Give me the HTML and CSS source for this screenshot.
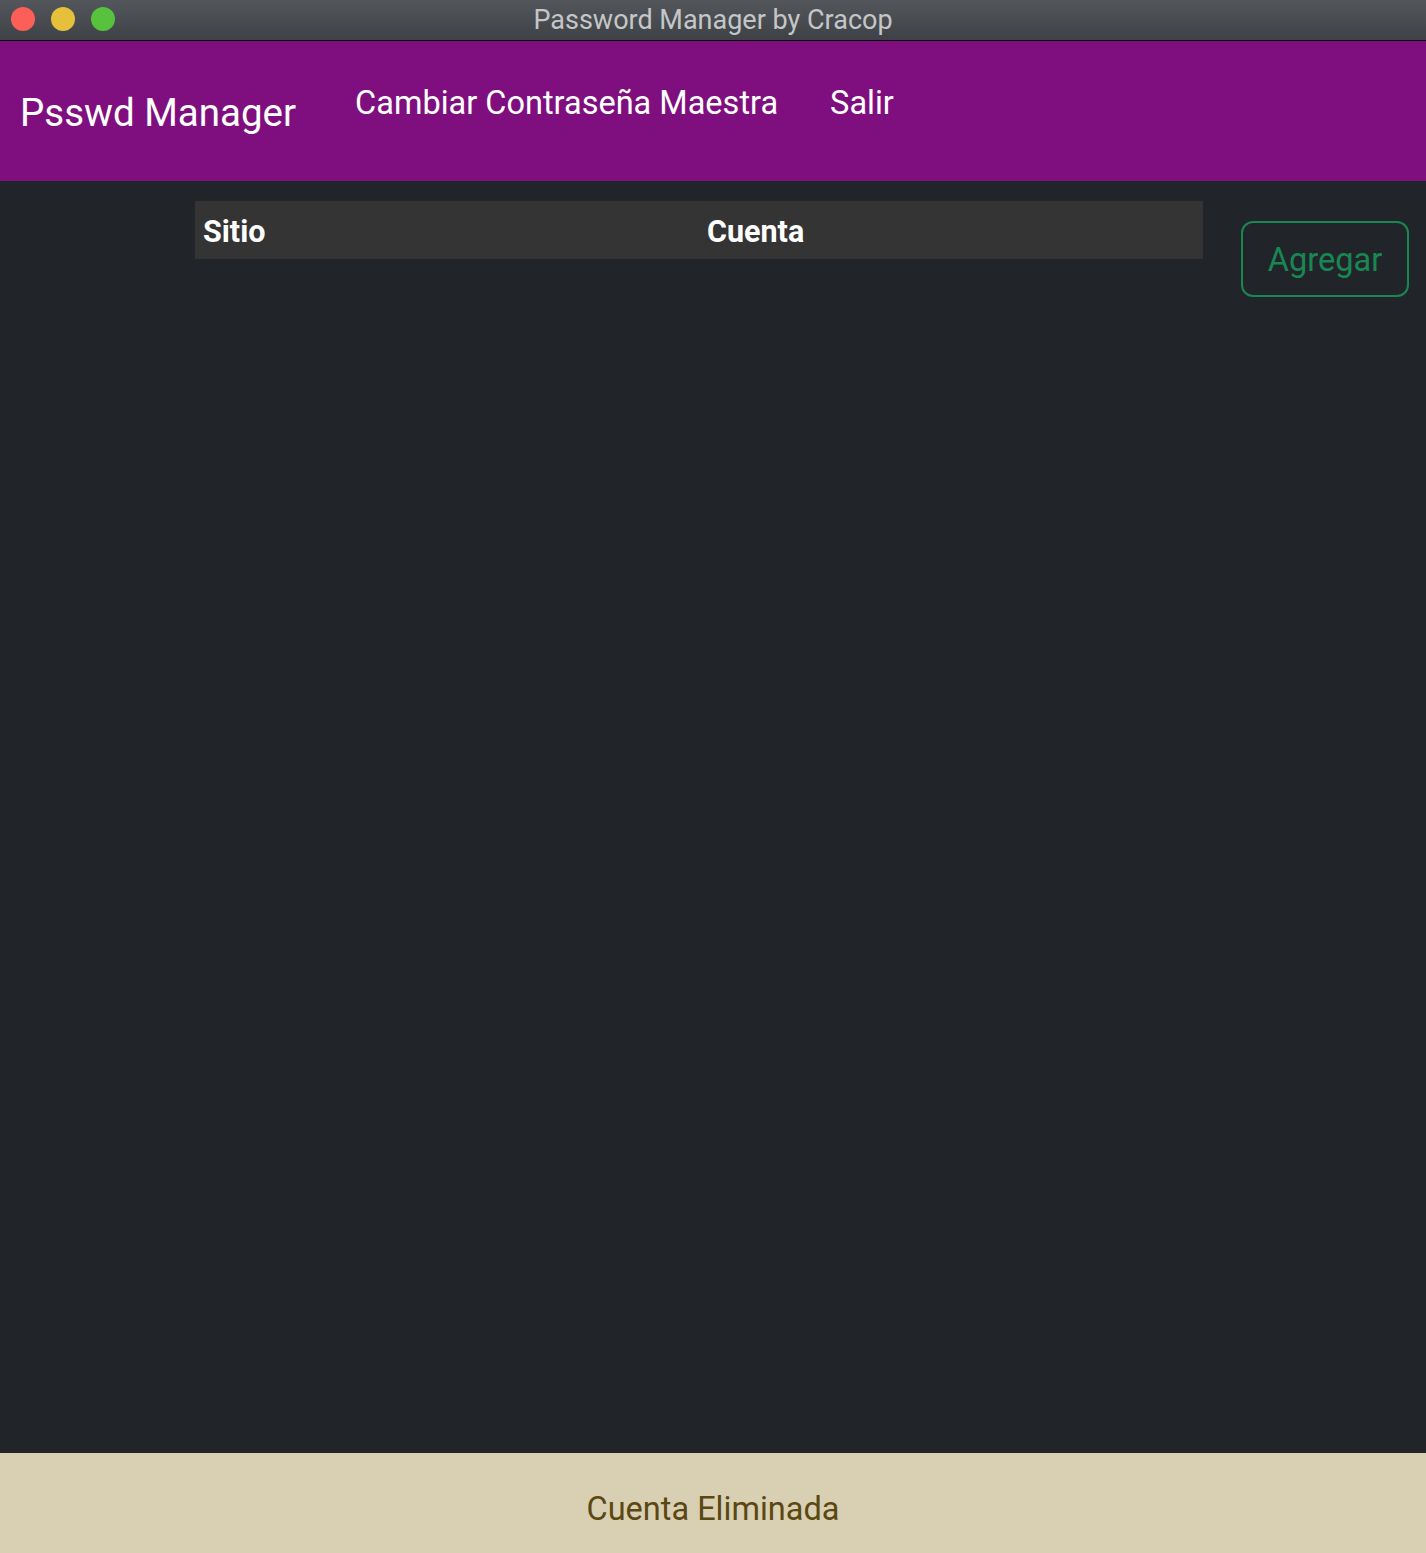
FILE: index.html
```html
<!DOCTYPE html>
<html lang="es">
<head>
<meta charset="utf-8">
<title>Password Manager by Cracop</title>
<link rel="stylesheet" href="styles.css">
</head>
<body>
<div class="window">
  <header class="titlebar">
    <div class="lights">
      <span class="light red"></span>
      <span class="light yellow"></span>
      <span class="light green"></span>
    </div>
    <div class="title">Password Manager by Cracop</div>
  </header>
  <nav class="navbar">
    <a class="brand">Psswd Manager</a>
    <ul class="nav">
      <li><a>Cambiar Contraseña Maestra</a></li>
      <li><a>Salir</a></li>
    </ul>
  </nav>
  <main class="content">
    <table class="table">
      <thead>
        <tr><th>Sitio</th><th>Cuenta</th></tr>
      </thead>
    </table>
    <button class="btn-add">Agregar</button>
  </main>
  <div class="alert">Cuenta Eliminada</div>
</div>
</body>
</html>
```
FILE: styles.css
```css
* { box-sizing: border-box; }
html, body { margin: 0; padding: 0; }
body {
  background: #212529;
  font-family: Roboto, "Liberation Sans", Arial, sans-serif;
  color: #fff;
}
.window {
  display: flex;
  flex-direction: column;
  height: 1553px;
}
.titlebar {
  height: 41px;
  flex: none;
  background: linear-gradient(#53575b, #3e4145);
  border-bottom: 1px solid #0c0c0c;
  display: flex;
  align-items: center;
  position: relative;
}
.lights {
  display: flex;
  gap: 16px;
  padding-left: 11px;
  padding-bottom: 2px;
}
.light {
  width: 24px;
  height: 24px;
  border-radius: 50%;
  display: block;
}
.red { background: #fc5f57; }
.yellow { background: #e6bf3b; }
.green { background: #58c13d; }
.title {
  position: absolute;
  left: 0;
  right: 0;
  top: 0;
  bottom: 0;
  display: flex;
  align-items: center;
  justify-content: center;
  padding-bottom: 0;
  font-size: 27px;
  color: #c4c6c8;
  pointer-events: none;
}
.navbar {
  flex: none;
  height: 140px;
  background: #7f0f7e;
  display: flex;
  align-items: center;
  padding: 0 20px;
  padding-bottom: 2px;
}
.brand {
  font-size: 38.5px;
  color: #fff;
  margin-right: 59px;
  padding-top: 4px;
}
.nav {
  list-style: none;
  margin: 0;
  padding: 0;
  display: flex;
  gap: 52px;
}
.nav li a {
  display: block;
  font-size: 32.5px;
  color: #fff;
  padding: 0 0 14px 0;
}
.content {
  flex: 1;
  display: flex;
  align-items: flex-start;
  padding: 20px 17px 0 195px;
}
.table {
  width: 1008px;
  border-collapse: collapse;
  flex: none;
}
.table th {
  background: #343434;
  text-align: left;
  font-weight: 700;
  font-size: 30.5px;
  height: 58px;
  padding: 2px 8px 0;
  width: 50%;
  color: #fff;
}
.btn-add {
  margin-left: 38px;
  margin-top: 20px;
  width: 168px;
  height: 76px;
  background: transparent;
  border: 2px solid #198754;
  border-radius: 12px;
  color: #198754;
  font-family: inherit;
  font-size: 32.5px;
  padding: 2px 0 0;
}
.alert {
  flex: none;
  height: 100px;
  background: #d9d0b4;
  color: #5b4712;
  font-size: 32.5px;
  display: flex;
  align-items: center;
  justify-content: center;
  padding-top: 12px;
}
```
